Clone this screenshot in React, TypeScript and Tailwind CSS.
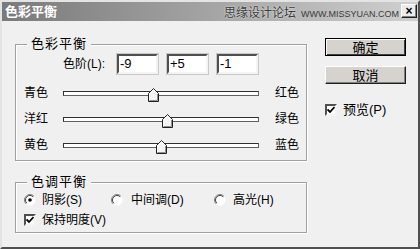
import React from "react";

function Thumb({ left }: { left: number }) {
  return (
    <svg
      className="absolute top-[8px]"
      style={{ left }}
      width="11"
      height="14"
      viewBox="0 0 11 14"
    >
      <polygon points="0.5,5.5 5.5,0.5 10.5,5.5 10.5,13.5 0.5,13.5" fill="#f4f4f4" stroke="#202020" />
      <polyline points="1.5,12.5 1.5,5.9 5.5,1.9 9.5,5.9" fill="none" stroke="#ffffff" />
      <polyline points="9.5,6 9.5,12.5 1.5,12.5" fill="none" stroke="#909090" />
    </svg>
  );
}

function SliderRow({ l, r, thumb }: { l: string; r: string; thumb: number }) {
  return (
    <div className="flex items-center h-[26px]">
      <div className="w-[39px]">{l}</div>
      <div className="relative w-[196px] h-[26px] flex items-center">
        <div className="w-full h-[5px] bg-white border border-[#303030] border-b-[#606060] border-r-[#606060]" />
        <Thumb left={thumb} />
      </div>
      <div className="ml-[16px]">{r}</div>
    </div>
  );
}

function Field({ v }: { v: string }) {
  return (
    <div className="w-[41px] h-[20px] bg-white border-2 border-t-[#505050] border-l-[#505050] border-b-[#f4f4f4] border-r-[#f4f4f4] shadow-[0_0_0_1px_#c8c8c8] pl-[1px] leading-[16px] text-[13px]">
      {v}
    </div>
  );
}

function Radio({ on }: { on?: boolean }) {
  return (
    <svg width="12" height="12" viewBox="0 0 12 12">
      <circle cx="6" cy="6" r="5.5" fill="#ffffff" />
      <path d="M 2.1 9.9 A 5.5 5.5 0 0 1 9.9 2.1" fill="none" stroke="#808080" />
      <path d="M 2.8 9.2 A 4.5 4.5 0 0 1 9.2 2.8" fill="none" stroke="#404040" />
      {on && <circle cx="6" cy="6" r="1.8" fill="#000" />}
    </svg>
  );
}

function Check() {
  return (
    <div className="w-[12px] h-[12px] bg-white border-2 border-t-[#505050] border-l-[#505050] border-b-[#f4f4f4] border-r-[#f4f4f4] flex items-center justify-center">
      <svg width="8" height="8" viewBox="0 0 8 8">
        <path d="M0.5 3.5 L3 6 L7.5 1" fill="none" stroke="#000" strokeWidth="1.8" />
      </svg>
    </div>
  );
}

function Group({ title, h, children }: { title: string; h: string; children: React.ReactNode }) {
  return (
    <div className={`relative w-[292px] ${h} border border-[#a0a0a0] shadow-[inset_1px_1px_0_#fff,1px_1px_0_#fff]`}>
      <div className="absolute top-[-9px] left-[11px] px-[4px] bg-[#f0f0f0] text-[13px] tracking-[1px] leading-[16px]">
        {title}
      </div>
      {children}
    </div>
  );
}

export default function App() {
  return (
    <div className="w-[420px] h-[249px] overflow-hidden bg-[#f0f0f0] border-2 border-t-[#e4e4e4] border-l-[#e4e4e4] border-r-[#505050] border-b-[#505050] flex flex-col text-[12px] text-black font-['Liberation_Sans','Noto_Sans_CJK_SC',sans-serif]">
      <div className="relative h-[19px] flex items-center bg-linear-to-r from-[#7a7a7a] via-[#a4a4a4] to-[#d0d0d0] pl-[3px]">
        <div className="text-white font-bold text-[13px] leading-[16px]">色彩平衡</div>
        <div className="ml-auto mr-[19px] flex items-end gap-[5px] mt-[3px]">
          <span className="text-[12px] leading-[14px] text-[#3a3a3a] [text-shadow:0_0_2px_#fff]">思缘设计论坛</span>
          <span className="text-[9px] leading-[12px] text-[#3a3a3a]">WWW.MISSYUAN.COM</span>
        </div>
        <div className="absolute right-[1px] top-[2px] w-[16px] h-[14px] bg-[#ececec] border border-[#202020] border-t-white border-l-white shadow-[inset_-1px_-1px_0_#808080] flex items-center justify-center text-[12px] font-bold leading-none">
          ×
        </div>
      </div>
      <div className="flex flex-row flex-1">
        <div className="ml-[13px] mt-[23px] flex flex-col">
          <Group title="色彩平衡" h="h-[117px]">
            <div className="pl-[8px] pt-[9px]">
              <div className="flex items-center h-[20px]">
                <div className="ml-[39px] w-[54px]">色阶(L):</div>
                <div className="flex gap-[9px]">
                  <Field v="-9" />
                  <Field v="+5" />
                  <Field v="-1" />
                </div>
              </div>
              <div className="mt-[6px]">
                <SliderRow l="青色" r="红色" thumb={85} />
                <SliderRow l="洋红" r="绿色" thumb={99} />
                <SliderRow l="黄色" r="蓝色" thumb={93} />
              </div>
            </div>
          </Group>
          <div className="mt-[21px]">
            <Group title="色调平衡" h="h-[51px]">
              <div className="pl-[8px] pt-[7px]">
                <div className="flex items-center h-[20px]">
                  <div className="w-[87px] flex items-center gap-[6px]">
                    <Radio on />
                    <span>阴影(S)</span>
                  </div>
                  <div className="w-[103px] flex items-center gap-[8px]">
                    <Radio />
                    <span>中间调(D)</span>
                  </div>
                  <div className="flex items-center gap-[7px]">
                    <Radio />
                    <span>高光(H)</span>
                  </div>
                </div>
                <div className="flex items-center h-[20px] gap-[6px]">
                  <Check />
                  <span>保持明度(V)</span>
                </div>
              </div>
            </Group>
          </div>
        </div>
        <div className="ml-[18px] mt-[17px] flex flex-col">
          <div className="w-[81px] h-[18px] border border-black bg-[#d6d3ce] shadow-[inset_1px_1px_0_#fff,inset_-1px_-1px_0_#404040] flex items-center justify-center text-[13px] leading-none">
            确定
          </div>
          <div className="mt-[10px] w-[81px] h-[18px] bg-[#d6d3ce] border border-t-white border-l-white border-r-[#202020] border-b-[#202020] shadow-[inset_-1px_-1px_0_#808080] flex items-center justify-center text-[13px] leading-none">
            取消
          </div>
          <div className="mt-[19px] flex items-center gap-[6px] h-[14px]">
            <Check />
            <span className="text-[13px]">预览(P)</span>
          </div>
        </div>
      </div>
    </div>
  );
}
